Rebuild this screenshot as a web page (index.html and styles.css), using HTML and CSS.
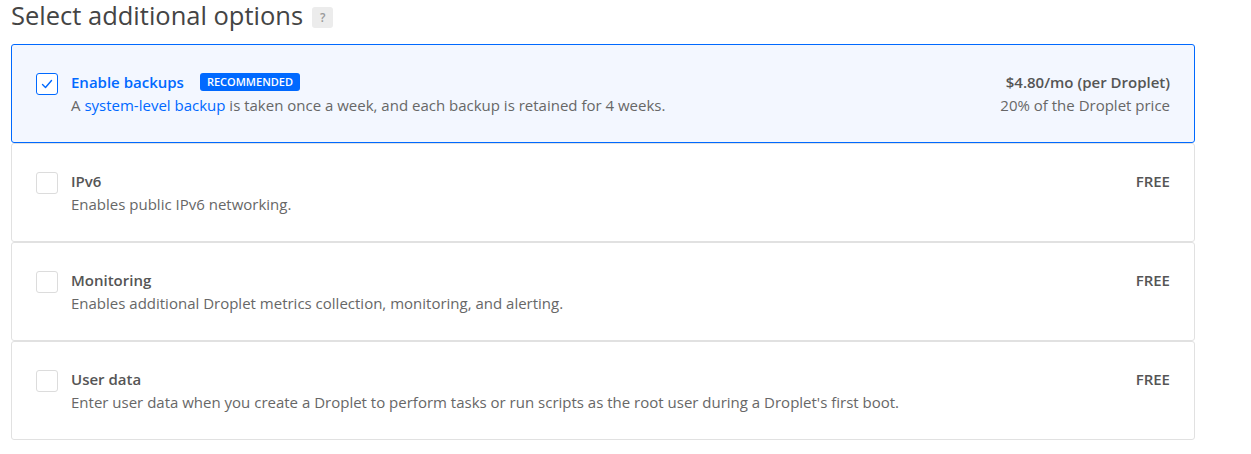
FILE: index.html
```html
<!DOCTYPE html>
<html>
<head>
<meta charset="utf-8">
<link rel="stylesheet" href="styles.css">
</head>
<body>
<div class="page">
  <h2 class="heading">Select additional options <span class="help">?</span></h2>
  <div class="options">
    <div class="option selected">
      <div class="check checked">
        <svg width="14" height="14" viewBox="0 0 14 14"><path d="M2.5 7.5 L5.5 10.5 L11.5 3.5" fill="none" stroke="#0069ff" stroke-width="1.4" stroke-linecap="round" stroke-linejoin="round"/></svg>
      </div>
      <div class="info">
        <div class="title-row"><span class="title">Enable backups</span><span class="badge">RECOMMENDED</span></div>
        <div class="desc">A <a class="link">system-level backup</a> is taken once a week, and each backup is retained for 4 weeks.</div>
      </div>
      <div class="price">
        <div class="amount">$4.80/mo (per Droplet)</div>
        <div class="note">20% of the Droplet price</div>
      </div>
    </div>
    <div class="option">
      <div class="check"></div>
      <div class="info">
        <div class="title-row"><span class="title">IPv6</span></div>
        <div class="desc">Enables public IPv6 networking.</div>
      </div>
      <div class="price"><div class="amount">FREE</div></div>
    </div>
    <div class="option">
      <div class="check"></div>
      <div class="info">
        <div class="title-row"><span class="title">Monitoring</span></div>
        <div class="desc">Enables additional Droplet metrics collection, monitoring, and alerting.</div>
      </div>
      <div class="price"><div class="amount">FREE</div></div>
    </div>
    <div class="option">
      <div class="check"></div>
      <div class="info">
        <div class="title-row"><span class="title">User data</span></div>
        <div class="desc">Enter user data when you create a Droplet to perform tasks or run scripts as the root user during a Droplet's first boot.</div>
      </div>
      <div class="price"><div class="amount">FREE</div></div>
    </div>
  </div>
</div>
</body>
</html>
```
FILE: styles.css
```css
* { box-sizing: border-box; }
body {
  margin: 0;
  background: #fff;
  font-family: "Open Sans", Lato, sans-serif;
  color: #676767;
}
.page {
  padding: 0 0 0 11px;
  width: 1195px;
}
.heading {
  margin: 0;
  height: 44px;
  font-size: 25.5px;
  font-weight: 400;
  color: #444;
  display: flex;
  align-items: flex-start;
  gap: 9px;
  line-height: 31px;
}
.help {
  margin-top: 7px;
  width: 21px;
  height: 21px;
  border-radius: 3px;
  background: #ececec;
  color: #999;
  font-size: 12px;
  line-height: 21px;
  text-align: center;
  font-weight: 600;
}
.options {
  display: flex;
  flex-direction: column;
}
.option {
  display: flex;
  align-items: flex-start;
  border: 1px solid #e1e1e1;
  border-radius: 3px;
  padding: 28px 24px 0 24px;
  height: 99px;
  background: #fff;
}
.option.selected {
  border-color: #0069ff;
  background: #f3f7ff;
}
.check {
  width: 22px;
  height: 22px;
  border: 1px solid #dcdcdc;
  border-radius: 3px;
  background: #fff;
  flex: none;
  display: flex;
  align-items: center;
  justify-content: center;
}
.check.checked { border-color: #0069ff; }
.info {
  flex: 1;
  margin-left: 13px;
}
.title-row {
  display: flex;
  align-items: center;
  height: 18px;
}
.title {
  font-size: 15px;
  font-weight: 600;
  color: #555;
  line-height: 18px;
}
.selected .title { color: #0069ff; }
.badge {
  margin-left: 16px;
  background: #0069ff;
  color: #fff;
  font-size: 11px;
  font-weight: 600;
  height: 18px;
  line-height: 18px;
  padding: 0 7px;
  border-radius: 3px;
}
.desc {
  font-size: 15px;
  line-height: 22px;
  margin-top: 3px;
  color: #676767;
}
.link { color: #0069ff; text-decoration: none; }
.price {
  text-align: right;
  font-size: 15px;
}
.amount {
  font-weight: 600;
  color: #555;
  line-height: 18px;
}
.note {
  line-height: 22px;
  margin-top: 3px;
  color: #676767;
}
```
